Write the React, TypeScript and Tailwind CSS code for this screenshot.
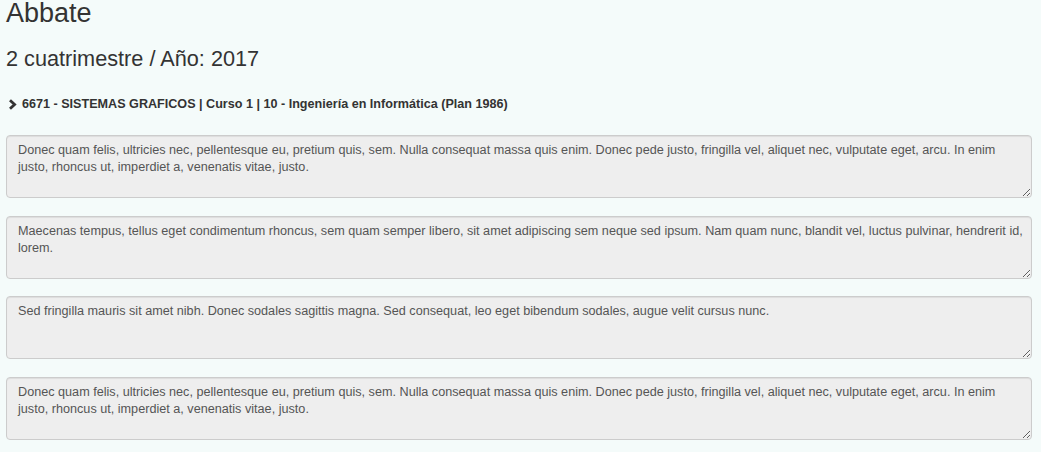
const comments = [
  "Donec quam felis, ultricies nec, pellentesque eu, pretium quis, sem. Nulla consequat massa quis enim. Donec pede justo, fringilla vel, aliquet nec, vulputate eget, arcu. In enim justo, rhoncus ut, imperdiet a, venenatis vitae, justo.",
  "Maecenas tempus, tellus eget condimentum rhoncus, sem quam semper libero, sit amet adipiscing sem neque sed ipsum. Nam quam nunc, blandit vel, luctus pulvinar, hendrerit id, lorem.",
  "Sed fringilla mauris sit amet nibh. Donec sodales sagittis magna. Sed consequat, leo eget bibendum sodales, augue velit cursus nunc.",
  "Donec quam felis, ultricies nec, pellentesque eu, pretium quis, sem. Nulla consequat massa quis enim. Donec pede justo, fringilla vel, aliquet nec, vulputate eget, arcu. In enim justo, rhoncus ut, imperdiet a, venenatis vitae, justo.",
];

const ChevronRight = () => (
  <svg width="9" height="11" viewBox="0 0 9 11" className="shrink-0">
    <path d="M2 1.2 L6.6 5.5 L2 9.8" fill="none" stroke="#333" strokeWidth="2.8" />
  </svg>
);

export default function App() {
  return (
    <div className="min-h-[453px] bg-[#f4fbfa] px-[6px] text-[#333] font-['Liberation_Sans',Arial,sans-serif]">
      <h3 className="text-[27px] leading-[29px] -mt-[1px]">Abbate</h3>
      <h4 className="text-[21.7px] leading-[24px] mt-[19px]">2 cuatrimestre / Año: 2017</h4>

      <div className="mt-[24px] flex items-center gap-[5px] pl-[2px]">
        <ChevronRight />
        <span className="text-[12.6px] font-bold leading-[18px]">
          6671 - SISTEMAS GRAFICOS | Curso 1 | 10 - Ingeniería en Informática (Plan 1986)
        </span>
      </div>

      <div className="mt-[22px] flex flex-col gap-[17.67px] w-[1026px]">
        {comments.map((text, i) => (
          <textarea
            key={i}
            readOnly
            value={text}
            className="block w-full h-[63px] resize-y rounded-[4px] border border-[#ccc] bg-[#eee] pl-[11px] pr-[6px] pt-[6px] pb-[4px] text-[12.65px] leading-[17px] text-[#555] shadow-[inset_0_1px_1px_rgba(0,0,0,0.075)] outline-none font-['Liberation_Sans',Arial,sans-serif]"
          />
        ))}
      </div>
    </div>
  );
}
